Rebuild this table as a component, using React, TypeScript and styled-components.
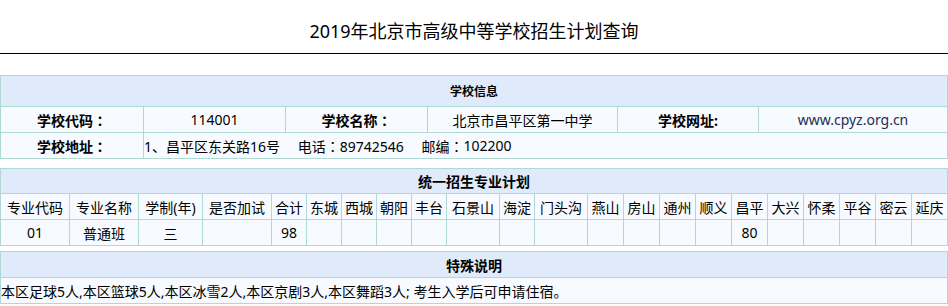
import React from "react";
import styled, { createGlobalStyle } from "styled-components";

const GlobalStyle = createGlobalStyle`
  html, body { margin: 0; padding: 0; background: #fff; }
  body {
    font-family: "Noto Sans", "Noto Sans CJK SC", sans-serif;
    color: #000;
  }
`;

const Page = styled.div`
  width: 948px;
`;

const TitleBar = styled.h1`
  margin: 0;
  height: 53px;
  box-sizing: content-box;
  border-bottom: 1px solid #000;
  display: flex;
  justify-content: center;
  align-items: flex-start;
  padding: 0;
  font-size: 18px;
  font-weight: normal;
  line-height: 24px;
  & > span { margin-top: 19px; }
`;

const Grid = styled.div<{ $cols: string; $mt: number }>`
  display: grid;
  grid-template-columns: ${(p) => p.$cols};
  gap: 1px;
  padding: 1px;
  background: #b0d8d4;
  margin-top: ${(p) => p.$mt}px;
`;

const HeadCell = styled.div<{ $size: number; $h: number }>`
  grid-column: 1 / -1;
  height: ${(p) => p.$h}px;
  background: #dfebfb;
  display: flex;
  align-items: center;
  justify-content: center;
  font-size: ${(p) => p.$size}px;
  font-weight: bold;
`;

const Cell = styled.div<{ $bold?: boolean; $left?: boolean; $span?: number; $color?: string }>`
  height: 25px;
  background: #f7fbff;
  display: flex;
  align-items: center;
  justify-content: ${(p) => (p.$left ? "flex-start" : "center")};
  font-size: 14px;
  font-weight: ${(p) => (p.$bold ? "bold" : "normal")};
  color: ${(p) => p.$color || "#000"};
  white-space: pre;
  overflow: hidden;
  ${(p) => (p.$span ? `grid-column: span ${p.$span};` : "")}
`;

/* full-width colon drawn centred in its em box, as the reference font does */
const Colon = styled.span`
  font-family: "Noto Sans CJK TC", sans-serif;
`;

const C = () => <Colon>：</Colon>;

const planHeads = [
  "专业代码", "专业名称", "学制(年)", "是否加试", "合计", "东城", "西城", "朝阳", "丰台",
  "石景山", "海淀", "门头沟", "燕山", "房山", "通州", "顺义", "昌平", "大兴", "怀柔",
  "平谷", "密云", "延庆",
];
const planRow = [
  "01", "普通班", "三", "", "98", "", "", "", "", "", "", "", "", "", "", "", "80", "", "",
  "", "", "",
];
const planCols = "68px 68px 63px 68px 34px 34px 34px 34px 34px 52px 34px 52px repeat(10, 35px)";

export default function App() {
  return (
    <Page>
      <GlobalStyle />
      <TitleBar>
        <span>2019年北京市高级中等学校招生计划查询</span>
      </TitleBar>

      <Grid $cols="142px 141px 141px 189px 140px 188px" $mt={21}>
        <HeadCell $size={12} $h={30}>学校信息</HeadCell>
        <Cell $bold>学校代码<C /></Cell>
        <Cell>114001</Cell>
        <Cell $bold>学校名称<C /></Cell>
        <Cell>北京市昌平区第一中学</Cell>
        <Cell $bold>学校网址:</Cell>
        <Cell $color="#1f2d52">www.cpyz.org.cn</Cell>
        <Cell $bold>学校地址<C /></Cell>
        <Cell $left $span={5}>
          {"1、昌平区东关路16号\u3000 电话"}<C />{"89742546\u3000 邮编"}<C />{"102200"}
        </Cell>
      </Grid>

      <Grid $cols={planCols} $mt={9}>
        <HeadCell $size={14} $h={24}>统一招生专业计划</HeadCell>
        {planHeads.map((h) => (
          <Cell key={h}>{h}</Cell>
        ))}
        {planRow.map((v, i) => (
          <Cell key={i}>{v}</Cell>
        ))}
      </Grid>

      <Grid $cols="1fr" $mt={5}>
        <HeadCell $size={14} $h={25}>特殊说明</HeadCell>
        <Cell $left>本区足球5人,本区篮球5人,本区冰雪2人,本区京剧3人,本区舞蹈3人; 考生入学后可申请住宿。</Cell>
      </Grid>
    </Page>
  );
}
